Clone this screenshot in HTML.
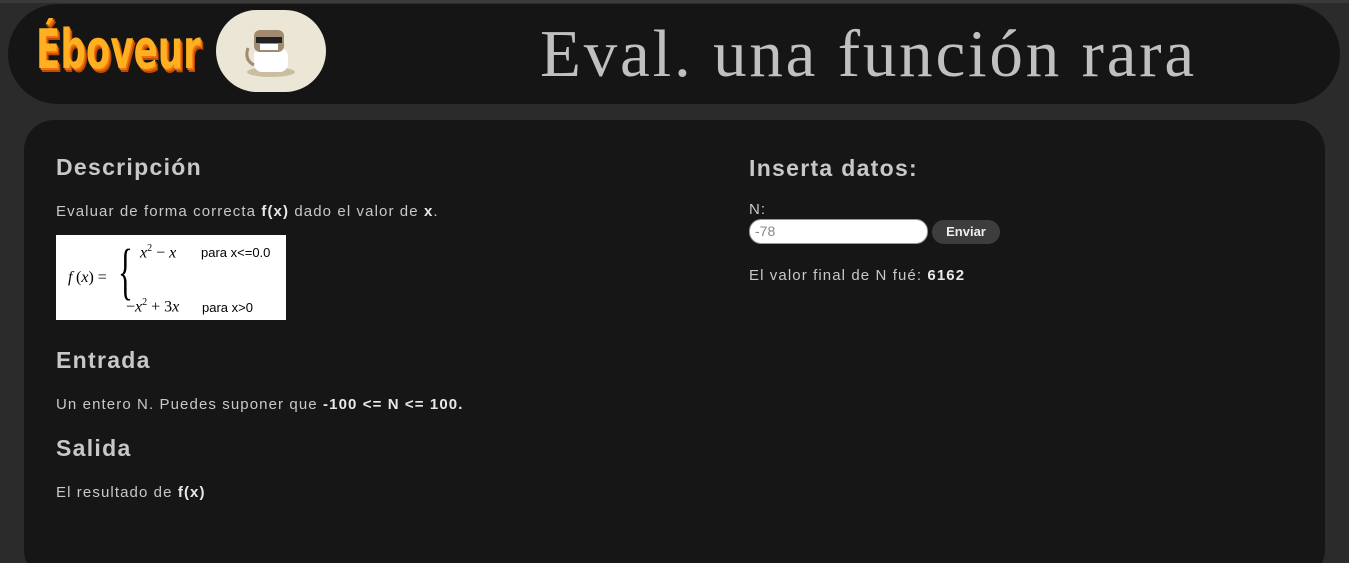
<!DOCTYPE html>
<html><head><meta charset="utf-8"><style>
*{box-sizing:border-box;margin:0;padding:0}
html,body{width:1349px;height:563px;overflow:hidden}
body{background:#2b2b2b;font-family:"Liberation Sans",sans-serif;color:#c8c8c8;position:relative}
.strip{position:absolute;left:0;top:0;width:1349px;height:3px;background:#3a3a3a}
.hdr{position:absolute;left:8px;top:4px;width:1332px;height:100px;background:#151515;border-radius:50px}
.logo{position:absolute;left:36px;top:18px;font-size:54px;font-weight:bold;color:#ffb020;text-shadow:2px 2px 0 #f07010,4px 4px 0 #c04a00;font-family:"DejaVu Sans",sans-serif;transform:scaleX(0.66);transform-origin:left;white-space:nowrap}
.cat{position:absolute;left:216px;top:10px;width:110px;height:82px;border-radius:41px;background:#ece6d6}
.title{position:absolute;left:540px;top:16px;font-family:"Liberation Serif",serif;font-size:67px;color:#c0c0c0;letter-spacing:2.8px;white-space:nowrap}
.main{position:absolute;left:24px;top:120px;width:1301px;height:460px;background:#161616;border-radius:30px}
h2{position:absolute;font-size:23px;font-weight:bold;color:#c8c8c8;letter-spacing:1.3px;white-space:nowrap}
p{position:absolute;font-size:15px;color:#c8c8c8;letter-spacing:1.1px;white-space:nowrap}
b{color:#e8e8e8}
.img{position:absolute;left:56px;top:235px;width:230px;height:85px;background:#fff;color:#000;font-family:"Liberation Serif",serif}
</style></head><body>
<div class="strip"></div>
<div class="hdr"></div>
<div class="logo">Éboveur</div>
<div class="cat"><svg width="110" height="82" viewBox="0 0 110 82"><ellipse cx="55" cy="62" rx="24" ry="5" fill="#c9bf9f"/><rect x="38" y="38" width="34" height="24" rx="8" fill="#fff"/><rect x="38" y="20" width="30" height="22" rx="6" fill="#a08a70"/><rect x="40" y="27" width="26" height="6" fill="#222"/><rect x="44" y="34" width="18" height="6" fill="#fff"/><path d="M38 55 Q28 50 32 38" stroke="#a08a70" stroke-width="3" fill="none"/></svg></div>
<div class="title">Eval. una función rara</div>
<div class="main"></div>
<h2 style="left:56px;top:154px">Descripción</h2>
<p style="left:56px;top:203px">Evaluar de forma correcta <b>f(x)</b> dado el valor de <b>x</b>.</p>
<div class="img">
<span style="position:absolute;left:12px;top:34px;font-size:16px;font-style:italic">f</span><span style="position:absolute;left:20px;top:34px;font-size:16px">(<i>x</i>) =</span>
<span style="position:absolute;left:62px;top:6px;font-size:62px;font-weight:100;line-height:1;transform:scaleX(0.5);transform-origin:left">{</span>
<span style="position:absolute;left:84px;top:8px;font-size:16px"><i>x</i><sup style="font-size:10px">2</sup> − <i>x</i></span>
<span style="position:absolute;left:145px;top:10px;font-size:13px;font-family:'Liberation Sans',sans-serif">para x&lt;=0.0</span>
<span style="position:absolute;left:70px;top:62px;font-size:16px">−<i>x</i><sup style="font-size:10px">2</sup> + 3<i>x</i></span>
<span style="position:absolute;left:146px;top:65px;font-size:13px;font-family:'Liberation Sans',sans-serif">para x&gt;0</span>
</div>
<h2 style="left:56px;top:347px">Entrada</h2>
<p style="left:56px;top:396px">Un entero N. Puedes suponer que <b>-100 &lt;= N &lt;= 100.</b></p>
<h2 style="left:56px;top:435px">Salida</h2>
<p style="left:56px;top:484px">El resultado de <b>f(x)</b></p>
<h2 style="left:749px;top:155px">Inserta datos:</h2>
<p style="left:749px;top:201px">N:</p>
<div style="position:absolute;left:749px;top:219px;width:179px;height:25px;background:#fff;border-radius:12px;border:1px solid #999;font-size:14px;color:#888;padding:3px 5px">-78</div>
<div style="position:absolute;left:932px;top:220px;width:68px;height:24px;background:#3d3d3d;border-radius:12px;font-size:13px;font-weight:bold;color:#eee;text-align:center;line-height:24px">Enviar</div>
<p style="left:749px;top:267px">El valor final de N fué: <b>6162</b></p>
</body></html>
